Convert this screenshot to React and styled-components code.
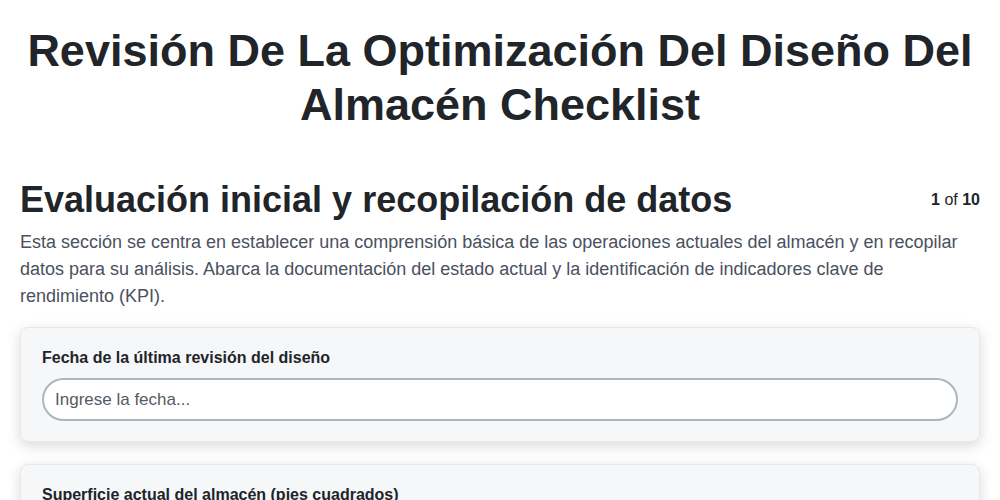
import React from 'react';
import styled, { createGlobalStyle } from 'styled-components';

const GlobalStyle = createGlobalStyle`
  body {
    margin: 0;
    background: #ffffff;
    font-family: "Liberation Sans", Arial, sans-serif;
    color: #212529;
  }
  * { box-sizing: border-box; }
`;

const Page = styled.div`
  padding: 0 20px 40px;
`;

const Title = styled.h1`
  margin: 24px 0 0;
  font-size: 45px;
  line-height: 54px;
  font-weight: 700;
  text-align: center;
  color: #212529;
`;

const SectionHeader = styled.div`
  display: flex;
  align-items: center;
  justify-content: space-between;
  margin-top: 46px;
`;

const SectionTitle = styled.h2`
  margin: 0;
  font-size: 36px;
  line-height: 43px;
  font-weight: 700;
  color: #212529;
`;

const Counter = styled.div`
  font-size: 16px;
  color: #212529;

  b {
    font-weight: 700;
  }
`;

const Description = styled.p`
  margin: 8px 0 17px;
  font-size: 18px;
  line-height: 27px;
  color: #4a5160;
`;

const Card = styled.div`
  background: #f6f7f9;
  border: 1px solid #e6e8ec;
  border-radius: 8px;
  padding: 20px 21px 20px 21px;
  margin-bottom: 22px;
  box-shadow: 0 4px 14px rgba(0, 0, 0, 0.15);
`;

const Label = styled.label`
  display: block;
  font-size: 16px;
  line-height: 20px;
  font-weight: 700;
  color: #212529;
  margin-bottom: 10px;
`;

const Input = styled.input`
  display: block;
  width: 100%;
  height: 43px;
  padding: 0 11px;
  border: 2px solid #adb5bd;
  border-radius: 22px;
  background: #ffffff;
  font-family: "Liberation Sans", Arial, sans-serif;
  font-size: 17px;
  color: #212529;
  outline: none;

  &::placeholder {
    color: #555b62;
  }
`;

const fields = [
  { label: 'Fecha de la última revisión del diseño', placeholder: 'Ingrese la fecha...' },
  { label: 'Superficie actual del almacén (pies cuadrados)', placeholder: 'Ingrese la superficie...' },
];

export default function App() {
  return (
    <Page>
      <GlobalStyle />
      <Title>Revisión De La Optimización Del Diseño Del Almacén Checklist</Title>
      <SectionHeader>
        <SectionTitle>Evaluación inicial y recopilación de datos</SectionTitle>
        <Counter>
          <b>1</b> of <b>10</b>
        </Counter>
      </SectionHeader>
      <Description>
        Esta sección se centra en establecer una comprensión básica de las operaciones actuales del
        almacén y en recopilar datos para su análisis. Abarca la documentación del estado actual y la
        identificación de indicadores clave de rendimiento (KPI).
      </Description>
      {fields.map((f) => (
        <Card key={f.label}>
          <Label>{f.label}</Label>
          <Input type="text" placeholder={f.placeholder} />
        </Card>
      ))}
    </Page>
  );
}
